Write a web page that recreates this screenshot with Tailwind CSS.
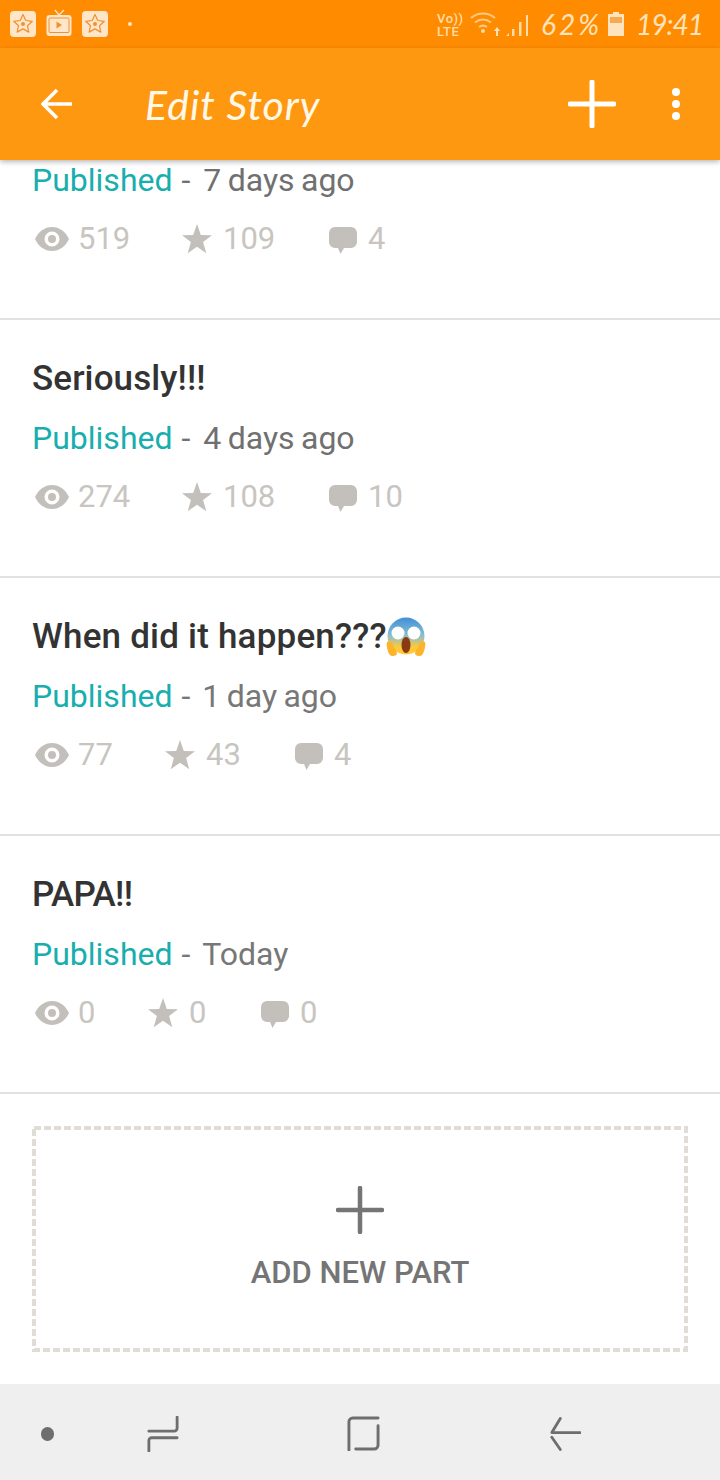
<!DOCTYPE html>
<html>
<head>
<meta charset="utf-8">
<script src="https://cdn.jsdelivr.net/npm/@tailwindcss/browser@4"></script>
</head>
<body class="bg-white">
<div class="w-[720px] h-[1480px] flex flex-col overflow-hidden font-['Roboto',sans-serif] bg-white">

  <!-- Status bar -->
  <div class="h-12 shrink-0 bg-[#ff8c00] flex items-center pl-[10px] pr-[17px] text-[#ffe3bd]">
    <svg class="w-[26px] h-[26px] mb-[1px]" viewBox="0 0 26 26"><rect width="26" height="26" rx="4" fill="#ffe6c8"/><path d="M13 3.500l2.800 6 6.500.8-4.800 4.400 1.300 6.400-5.800-3.200-5.800 3.200 1.300-6.400-4.800-4.400 6.500-.8z" fill="none" stroke="#f09030" stroke-width="1.200" stroke-linejoin="round"/><circle cx="13" cy="13" r="2" fill="#f09030"/></svg>
    <svg class="w-[26px] h-[28px] ml-[10px] mb-[3px]" viewBox="0 0 26 28"><path d="M9 1l4 5 5-5" fill="none" stroke="#ffe6c8" stroke-width="1.300"/><rect x="0.500" y="6" width="25" height="21" rx="3" fill="#ffe6c8"/><rect x="3" y="9" width="20" height="14.500" rx="1" fill="none" stroke="#f09030" stroke-width="1"/><path d="M10.500 12.500l5.500 3.500-5.500 3.500z" fill="#f09030"/></svg>
    <svg class="w-[26px] h-[26px] ml-[10px] mb-[1px]" viewBox="0 0 26 26"><rect width="26" height="26" rx="4" fill="#ffe6c8"/><path d="M13 3.500l2.800 6 6.500.8-4.800 4.400 1.300 6.400-5.800-3.200-5.800 3.200 1.300-6.400-4.800-4.400 6.500-.8z" fill="none" stroke="#f09030" stroke-width="1.200" stroke-linejoin="round"/><circle cx="13" cy="13" r="2" fill="#f09030"/></svg>
    <div class="w-1 h-1 rounded-full bg-[#ffe3bd] ml-[20px]"></div>
    <div class="ml-auto flex items-center">
      <div class="flex flex-col text-[13px] leading-[13px] tracking-[0.5px] font-medium text-[#ffdca8] w-[27px] text-left mt-[1px]"><span>Vo))</span><span>LTE</span></div>
      <svg class="w-[60px] h-[28px] ml-[6px]" viewBox="0 0 60 28"><path d="M1 8a18 18 0 0 1 24 0M5 12.500a12.500 12.500 0 0 1 16 0M9 17a7 7 0 0 1 8 0" fill="none" stroke="#ffc987" stroke-width="2"/><circle cx="13" cy="21" r="2" fill="#ffd9a6"/><path d="M26 26v-5h-2l3-4 3 4h-2v5z" fill="#ffe3bd"/><path d="M36 26l3-3v3zM42 26v-7h2.500v7zM49 26V12h2.500v14zM56 26V5h2v21z" fill="#ffdca8"/></svg>
      <span class="ml-[11px] text-[28px] leading-none font-['Lato',sans-serif] italic text-[#ffe3bd] tracking-[3px]">62%</span>
      <svg class="w-4 h-6 ml-[6px]" viewBox="0 0 16 24"><path d="M5 0h6v2h5v22H0V2h5z" fill="#ffe3bd"/><rect x="2" y="5" width="12" height="6" fill="#f5aa52"/></svg>
      <span class="ml-[12px] text-[28px] leading-none font-['Lato',sans-serif] italic text-[#ffe3bd] tracking-[-1px]">19:41</span>
    </div>
  </div>

  <!-- App bar -->
  <div class="relative z-10 h-[112px] shrink-0 bg-[#ff9811] flex items-center shadow-[0_2px_5px_rgba(0,0,0,0.28)] text-white">
    <svg class="w-[32px] h-[32px] ml-[41px]" viewBox="0 0 32 32"><path d="M31 16H3M16 2L2 16l14 14" fill="none" stroke="#fff" stroke-width="3.500" stroke-linejoin="miter"/></svg>
    <span class="ml-[72px] text-[41px] leading-none font-['Lato',sans-serif] italic text-[#fff8e8] tracking-[1px]">Edit Story</span>
    <svg class="w-[48px] h-[48px] ml-auto" viewBox="0 0 48 48"><path d="M24 2v44M2 24h44" fill="none" stroke="#fff" stroke-width="5" stroke-linecap="round"/></svg>
    <svg class="w-2 h-[32px] ml-[56px] mr-[40px]" viewBox="0 0 8 32"><circle cx="4" cy="4" r="4" fill="#fff"/><circle cx="4" cy="16" r="4" fill="#fff"/><circle cx="4" cy="28" r="4" fill="#fff"/></svg>
  </div>

  <!-- List -->
  <div class="flex-1 flex flex-col">
    <!-- Partial row -->
    <div class="h-[160px] border-b-2 border-[#e2e2e2] px-8 shrink-0">
      <div class="h-[40px] text-[32px] leading-[40px] text-[#707070]"><span class="text-[#18aeae]">Published</span> <span class="ml-[1px]">-</span> <span class="ml-[5px] [word-spacing:-1.500px]">7 days ago</span></div>
      <div class="mt-[19px] h-[40px] flex items-center text-[#c8c5c1] text-[31px]">
        <svg class="w-[34px] h-[24px] ml-[3px]" viewBox="0 0 34 24"><path fill="#c3c0bc" fill-rule="evenodd" d="M17 0C9.500 0 3.300 4.800 0 12c3.300 7.200 9.500 12 17 12s13.700-4.800 17-12C30.700 4.800 24.500 0 17 0zm0 4.500a7.500 7.500 0 1 1 0 15 7.500 7.500 0 0 1 0-15zm0 3.500a4 4 0 1 0 0 8 4 4 0 0 0 0-8z"/></svg>
        <span class="ml-[9px] w-[51px]">519</span>
        <svg class="w-[30px] h-[30px] ml-[53px]" viewBox="0 0 30 30"><path fill="#c3c0bc" d="M15 0l3.800 10.900 11.200.3-8.900 6.900 3.200 11.200L15 22.800 5.700 29.300l3.200-11.200L0 11.200l11.200-.3z"/></svg>
        <span class="ml-[11px] w-[51px]">109</span>
        <svg class="w-[28px] h-[28px] ml-[55px] mt-[4px]" viewBox="0 0 28 28"><path fill="#c3c0bc" d="M6 0h16a6 6 0 0 1 6 6v9a6 6 0 0 1-6 6h-7l-3.500 6L9 21H6a6 6 0 0 1-6-6V6a6 6 0 0 1 6-6z"/></svg>
        <span class="ml-[11px]">4</span>
      </div>
    </div>

    <!-- Seriously -->
    <div class="h-[258px] border-b-2 border-[#e2e2e2] px-8 shrink-0 pt-[39px]">
      <div class="h-[40px] text-[35px] leading-[40px] font-medium tracking-[0.1px] text-[#333333]">Seriously!!!</div>
      <div class="mt-[19px] h-[40px] text-[32px] leading-[40px] text-[#707070]"><span class="text-[#18aeae]">Published</span> <span class="ml-[1px]">-</span> <span class="ml-[5px] [word-spacing:-1.500px]">4 days ago</span></div>
      <div class="mt-[19px] h-[40px] flex items-center text-[#c8c5c1] text-[31px]">
        <svg class="w-[34px] h-[24px] ml-[3px]" viewBox="0 0 34 24"><path fill="#c3c0bc" fill-rule="evenodd" d="M17 0C9.500 0 3.300 4.800 0 12c3.300 7.200 9.500 12 17 12s13.700-4.800 17-12C30.700 4.800 24.500 0 17 0zm0 4.500a7.500 7.500 0 1 1 0 15 7.500 7.500 0 0 1 0-15zm0 3.500a4 4 0 1 0 0 8 4 4 0 0 0 0-8z"/></svg>
        <span class="ml-[9px] w-[51px]">274</span>
        <svg class="w-[30px] h-[30px] ml-[53px]" viewBox="0 0 30 30"><path fill="#c3c0bc" d="M15 0l3.800 10.900 11.200.3-8.900 6.900 3.200 11.200L15 22.800 5.700 29.300l3.200-11.200L0 11.200l11.200-.3z"/></svg>
        <span class="ml-[11px] w-[51px]">108</span>
        <svg class="w-[28px] h-[28px] ml-[55px] mt-[4px]" viewBox="0 0 28 28"><path fill="#c3c0bc" d="M6 0h16a6 6 0 0 1 6 6v9a6 6 0 0 1-6 6h-7l-3.500 6L9 21H6a6 6 0 0 1-6-6V6a6 6 0 0 1 6-6z"/></svg>
        <span class="ml-[11px]">10</span>
      </div>
    </div>

    <!-- When did it happen -->
    <div class="h-[258px] border-b-2 border-[#e2e2e2] px-8 shrink-0 pt-[39px]">
      <div class="h-[40px] flex items-center text-[35px] leading-[40px] font-medium tracking-[0.2px] text-[#333333]">
        <span>When did it happen???</span>
        <svg class="w-[40px] h-[42px] ml-[-1px]" viewBox="0 0 40 42">
          <defs><linearGradient id="scream" x1="0" y1="0" x2="0" y2="1"><stop offset="0" stop-color="#3f8fd8"/><stop offset="0.5" stop-color="#8cc0d0"/><stop offset="0.8" stop-color="#ffc93a"/></linearGradient></defs>
          <circle cx="20" cy="20" r="18.500" fill="url(#scream)"/>
          <ellipse cx="12" cy="17" rx="6.500" ry="6.500" fill="#fff"/><ellipse cx="28" cy="17" rx="6.500" ry="6.500" fill="#fff"/>
          <ellipse cx="20" cy="29" rx="4.500" ry="8" fill="#8a3a10"/>
          <path d="M1 26c3-2 5 0 6 3s3 4 4 8c.500 3-5 4-7 2S0 30 1 26zM39 26c-3-2-5 0-6 3s-3 4-4 8c-.500 3 5 4 7 2s4-9 3-13z" fill="#fdb42a"/>
        </svg>
      </div>
      <div class="mt-[19px] h-[40px] text-[32px] leading-[40px] text-[#777777]"><span class="text-[#18aeae]">Published</span> <span class="ml-[1px]">-</span> <span class="ml-[4px] [word-spacing:-1.500px]">1 day ago</span></div>
      <div class="mt-[19px] h-[40px] flex items-center text-[#c8c5c1] text-[31px]">
        <svg class="w-[34px] h-[24px] ml-[3px]" viewBox="0 0 34 24"><path fill="#c3c0bc" fill-rule="evenodd" d="M17 0C9.500 0 3.300 4.800 0 12c3.300 7.200 9.500 12 17 12s13.700-4.800 17-12C30.700 4.800 24.500 0 17 0zm0 4.500a7.500 7.500 0 1 1 0 15 7.500 7.500 0 0 1 0-15zm0 3.500a4 4 0 1 0 0 8 4 4 0 0 0 0-8z"/></svg>
        <span class="ml-[9px] w-[33px]">77</span>
        <svg class="w-[30px] h-[30px] ml-[54px]" viewBox="0 0 30 30"><path fill="#c3c0bc" d="M15 0l3.800 10.900 11.200.3-8.900 6.900 3.200 11.200L15 22.800 5.700 29.300l3.200-11.200L0 11.200l11.200-.3z"/></svg>
        <span class="ml-[11px] w-[34px]">43</span>
        <svg class="w-[28px] h-[28px] ml-[55px] mt-[4px]" viewBox="0 0 28 28"><path fill="#c3c0bc" d="M6 0h16a6 6 0 0 1 6 6v9a6 6 0 0 1-6 6h-7l-3.500 6L9 21H6a6 6 0 0 1-6-6V6a6 6 0 0 1 6-6z"/></svg>
        <span class="ml-[11px]">4</span>
      </div>
    </div>

    <!-- PAPA -->
    <div class="h-[258px] border-b-2 border-[#e2e2e2] px-8 shrink-0 pt-[39px]">
      <div class="h-[40px] text-[35px] leading-[40px] font-medium tracking-[-0.7px] text-[#333333]">PAPA!!</div>
      <div class="mt-[19px] h-[40px] text-[32px] leading-[40px] text-[#777777]"><span class="text-[#18aeae]">Published</span> <span class="ml-[1px]">-</span> <span class="ml-[4px]">Today</span></div>
      <div class="mt-[19px] h-[40px] flex items-center text-[#c8c5c1] text-[31px]">
        <svg class="w-[34px] h-[24px] ml-[3px]" viewBox="0 0 34 24"><path fill="#c3c0bc" fill-rule="evenodd" d="M17 0C9.500 0 3.300 4.800 0 12c3.300 7.200 9.500 12 17 12s13.700-4.800 17-12C30.700 4.800 24.500 0 17 0zm0 4.500a7.500 7.500 0 1 1 0 15 7.500 7.500 0 0 1 0-15zm0 3.500a4 4 0 1 0 0 8 4 4 0 0 0 0-8z"/></svg>
        <span class="ml-[9px] w-[17px]">0</span>
        <svg class="w-[30px] h-[30px] ml-[53px]" viewBox="0 0 30 30"><path fill="#c3c0bc" d="M15 0l3.800 10.900 11.200.3-8.900 6.900 3.200 11.200L15 22.800 5.700 29.300l3.200-11.200L0 11.200l11.200-.3z"/></svg>
        <span class="ml-[11px] w-[17px]">0</span>
        <svg class="w-[28px] h-[28px] ml-[55px] mt-[4px]" viewBox="0 0 28 28"><path fill="#c3c0bc" d="M6 0h16a6 6 0 0 1 6 6v9a6 6 0 0 1-6 6h-7l-3.500 6L9 21H6a6 6 0 0 1-6-6V6a6 6 0 0 1 6-6z"/></svg>
        <span class="ml-[11px]">0</span>
      </div>
    </div>

    <!-- Add new part -->
    <div class="px-8 pt-[32px]">
      <div class="relative h-[226px] flex flex-col items-center pt-[60px]">
        <svg class="absolute inset-0 w-full h-full" viewBox="0 0 656 226" fill="none"><rect x="2" y="2" width="652" height="222" stroke="#e2dcd6" stroke-width="4" stroke-dasharray="7 3"/></svg>
        <svg class="w-[48px] h-[48px]" viewBox="0 0 48 48"><path d="M24 2v44M2 24h44" fill="none" stroke="#757575" stroke-width="4.500" stroke-linecap="round"/></svg>
        <span class="mt-[19px] text-[31px] leading-[40px] font-medium text-[#757575]">ADD NEW PART</span>
      </div>
    </div>
  </div>

  <!-- Nav bar -->
  <div class="h-[96px] shrink-0 bg-[#efefef] flex items-center pl-[41px] pt-[3px]">
    <div class="w-[13px] h-[14px] rounded-full bg-[#6e6e6e]"></div>
    <svg class="w-[32px] h-[36px] ml-[93px]" viewBox="0 0 34 38"><path d="M32 1v12a3 3 0 0 1-3 3H2M32 23H5a3 3 0 0 0-3 3v11" fill="none" stroke="#6e6e6e" stroke-width="3" stroke-linecap="round"/></svg>
    <svg class="w-[33px] h-[35px] ml-[168px]" viewBox="0 0 34 36"><path d="M32 2H6a4 4 0 0 0-4 4v29M32 10v20a4 4 0 0 1-4 4H9" fill="none" stroke="#6e6e6e" stroke-width="3" stroke-linecap="round"/></svg>
    <svg class="w-[32px] h-[35px] ml-[169px]" viewBox="0 0 34 36"><path d="M33 17H3L12 2M3 22l9 13" fill="none" stroke="#6e6e6e" stroke-width="3" stroke-linecap="round" stroke-linejoin="round"/></svg>
  </div>
</div>
</body>
</html>
